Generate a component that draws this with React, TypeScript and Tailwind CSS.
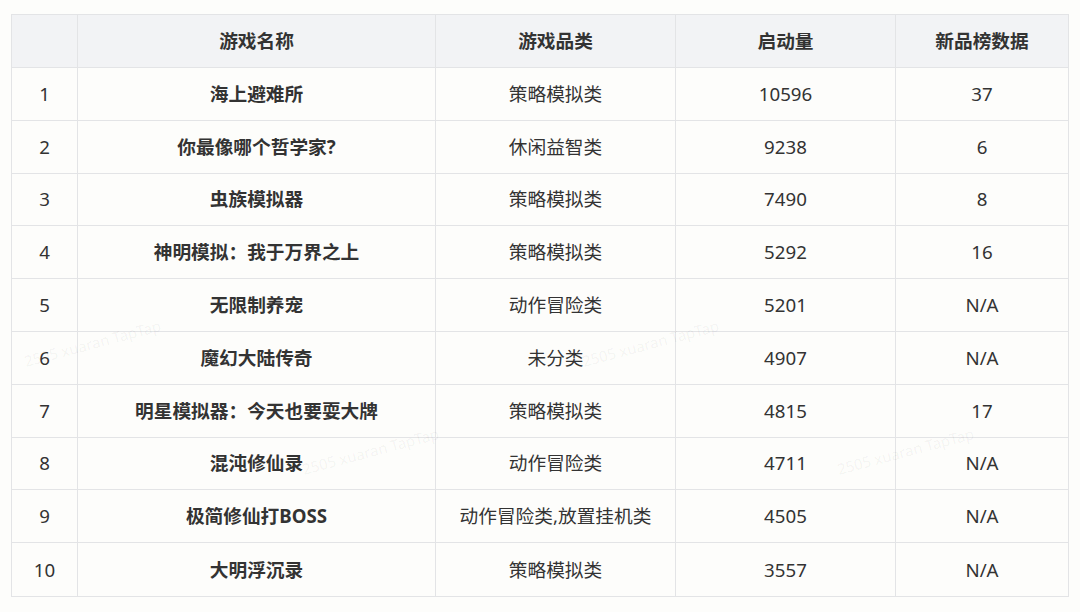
import React from "react";

const rows = [
  ["1", "海上避难所", "策略模拟类", "10596", "37"],
  ["2", "你最像哪个哲学家?", "休闲益智类", "9238", "6"],
  ["3", "虫族模拟器", "策略模拟类", "7490", "8"],
  ["4", "神明模拟：我于万界之上", "策略模拟类", "5292", "16"],
  ["5", "无限制养宠", "动作冒险类", "5201", "N/A"],
  ["6", "魔幻大陆传奇", "未分类", "4907", "N/A"],
  ["7", "明星模拟器：今天也要耍大牌", "策略模拟类", "4815", "17"],
  ["8", "混沌修仙录", "动作冒险类", "4711", "N/A"],
  ["9", "极简修仙打BOSS", "动作冒险类,放置挂机类", "4505", "N/A"],
  ["10", "大明浮沉录", "策略模拟类", "3557", "N/A"],
];

const font = { fontFamily: '"Noto Sans", "Noto Sans CJK SC", sans-serif' };

export default function App() {
  return (
    <div className="relative w-[1080px] h-[612px] bg-[#fdfdfb] overflow-hidden" style={font}>
      <div className="pt-[14px] pl-[11px]">
        <div className="w-[1058px] border border-[#e3e4e6] text-[18.7px] text-[#333333]">
          <div className="grid grid-cols-[66px_358px_240px_220px_1fr] h-[53px] bg-[#f2f3f5] border-b border-[#e3e4e6] font-bold">
            <div className="border-r border-[#e3e4e6]" />
            <div className="flex items-center justify-center border-r border-[#e3e4e6]">游戏名称</div>
            <div className="flex items-center justify-center border-r border-[#e3e4e6]">游戏品类</div>
            <div className="flex items-center justify-center border-r border-[#e3e4e6]">启动量</div>
            <div className="flex items-center justify-center">新品榜数据</div>
          </div>
          {rows.map((r, i) => (
            <div
              key={i}
              className={`grid grid-cols-[66px_358px_240px_220px_1fr] h-[52.8px] ${i < rows.length - 1 ? "border-b border-[#e3e4e6]" : ""}`}
            >
              <div className="flex items-center justify-center border-r border-[#e3e4e6]">{r[0]}</div>
              <div className="flex items-center justify-center border-r border-[#e3e4e6] font-bold">{r[1]}</div>
              <div className="flex items-center justify-center border-r border-[#e3e4e6]">{r[2]}</div>
              <div className="flex items-center justify-center border-r border-[#e3e4e6]">{r[3]}</div>
              <div className="flex items-center justify-center">{r[4]}</div>
            </div>
          ))}
        </div>
      </div>
      <div className="absolute left-[22px] top-[332px] -rotate-[15deg] text-[15px] text-[#000000]/[0.05] pointer-events-none">2505 xuaran TapTap</div>
      <div className="absolute left-[580px] top-[332px] -rotate-[15deg] text-[15px] text-[#000000]/[0.05] pointer-events-none">2505 xuaran TapTap</div>
      <div className="absolute left-[300px] top-[440px] -rotate-[15deg] text-[15px] text-[#000000]/[0.05] pointer-events-none">2505 xuaran TapTap</div>
      <div className="absolute left-[835px] top-[440px] -rotate-[15deg] text-[15px] text-[#000000]/[0.05] pointer-events-none">2505 xuaran TapTap</div>
    </div>
  );
}
